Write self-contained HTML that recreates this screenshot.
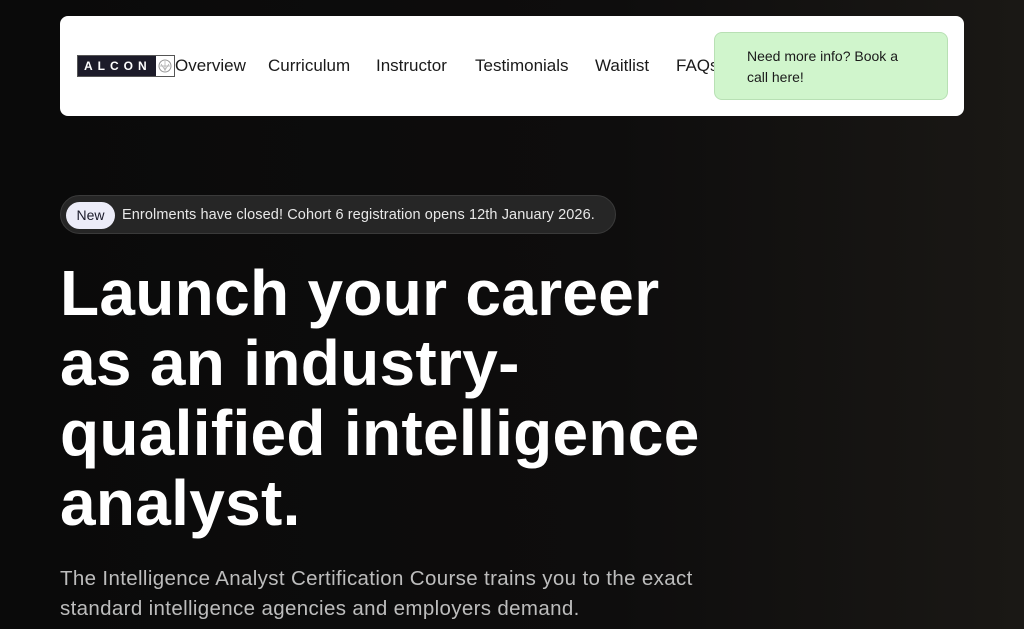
<!DOCTYPE html>
<html><head><meta charset="utf-8"><style>
*{margin:0;padding:0;box-sizing:border-box}
body{width:1024px;height:629px;overflow:hidden;background:linear-gradient(90deg,#0a0a0a 0%,#0e0d0d 60%,#1a1815 100%);font-family:"Liberation Sans",sans-serif;position:relative}
.nav{position:absolute;left:60px;top:16px;width:904px;height:100px;background:#fff;border-radius:8px}
.logo{position:absolute;left:17px;top:39px;width:98px;height:22px;border:1px solid #555;display:flex}
.logo .d{width:78px;background:#1c1b29;color:#fff;font-size:12px;font-weight:bold;letter-spacing:5px;line-height:20px;padding-left:6px}
.logo .w{flex:1;background:#fff;display:flex;align-items:center;justify-content:center}
.links{position:absolute;left:115px;top:40px;font-size:17px;color:#1a1a1a}
.links span{position:absolute;white-space:nowrap}
.cta{position:absolute;left:654px;top:16px;width:234px;height:68px;background:#d0f5cc;border:1px solid #b8e0b4;border-radius:8px;font-size:14px;color:#1a1a1a;padding:13px 32px;line-height:21px}
.badge{position:absolute;left:60px;top:195px;width:556px;height:39px;background:#262626;border:1px solid #3a3a3a;border-radius:20px}
.badge .n{position:absolute;left:5px;top:6px;width:49px;height:27px;background:#ececf8;border-radius:14px;color:#1a1a2a;font-size:14px;line-height:27px;text-align:center}
.badge .t{position:absolute;left:61px;top:11px;color:#e8e8e8;font-size:14.5px;letter-spacing:0.1px}
h1{position:absolute;left:60px;top:258px;color:#fff;font-size:64px;font-weight:bold;line-height:70px;letter-spacing:0.3px}
p{position:absolute;left:60px;top:564px;color:#bdbdbd;font-size:20.5px;line-height:30px;width:680px;letter-spacing:0.35px}
</style></head><body>
<div class="nav">
<div class="logo"><div class="d">ALCON</div><div class="w"><svg width="14" height="14" viewBox="0 0 14 14"><circle cx="7" cy="7" r="6" fill="none" stroke="#999"/><path d="M3 5l4 6 4-6M7 2v10M2 7h10" stroke="#aaa" fill="none" stroke-width=".7"/></svg></div></div>
<div class="links"><span style="left:0">Overview</span><span style="left:93px">Curriculum</span><span style="left:201px">Instructor</span><span style="left:300px">Testimonials</span><span style="left:420px">Waitlist</span><span style="left:501px">FAQs</span></div>
<div class="cta">Need more info? Book a call here!</div>
</div>
<div class="badge"><div class="n">New</div><div class="t">Enrolments have closed! Cohort 6 registration opens 12th January 2026.</div></div>
<h1>Launch your career<br>as an industry-<br>qualified intelligence<br>analyst.</h1>
<p>The Intelligence Analyst Certification Course trains you to the exact standard intelligence agencies and employers demand.</p>
</body></html>
